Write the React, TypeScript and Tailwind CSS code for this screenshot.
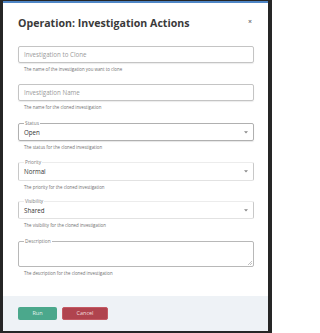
import React from 'react'

const font = { fontFamily: '"Open Sans", "Noto Sans", sans-serif' }

function Helper({ text }: { text: string }) {
  return <div className="mt-[3px] h-[6px] pl-[6px] text-[4.4px] leading-[6px] text-[#707070]">{text}</div>
}

function TextField({ placeholder }: { placeholder: string }) {
  return (
    <div className="flex h-[17px] items-center rounded-[2px] border border-[#c4c4c4] px-[5px] text-[6.2px] text-[#9a9a9a] shadow-[0_1px_1px_rgba(0,0,0,0.08)]">
      {placeholder}
    </div>
  )
}

function Caret() {
  return (
    <svg width="4" height="3" viewBox="0 0 4 3" className="shrink-0">
      <path d="M0 0.3 L4 0.3 L2 2.6 Z" fill="#8a8a8a" />
    </svg>
  )
}

function SelectField({ label, value, tall, faint }: { label: string; value: string; tall?: boolean; faint?: boolean }) {
  return (
    <div
      className={`relative flex items-center justify-between rounded-[2px] border px-[5px] ${tall ? 'h-[19px]' : 'h-[18px]'} ${
        faint ? 'border-[#c8c8c8] border-t-[#ececec] border-b-[#e2e2e2]' : 'border-[#b0b0b0] shadow-[0_1px_1px_rgba(0,0,0,0.1)]'
      }`}
    >
      <span className="absolute -top-[3px] left-[5px] bg-white px-[1px] text-[4.8px] leading-[5px] text-[#7a7a7a]">{label}</span>
      <span className="pt-[1px] text-[6.2px] text-[#333]">{value}</span>
      <Caret />
    </div>
  )
}

export default function App() {
  return (
    <div className="h-[333px] w-[272px] bg-[#262626] pb-[2px] pl-[3px] pr-[4px] pt-[1px]" style={font}>
      <div className="flex h-full flex-col border-t-2 border-[#4f86c6] bg-white">
        <div className="flex flex-col pl-[15px] pr-[14px]">
          <div className="relative mt-[13px] flex h-[14px] items-center">
            <h1 className="text-[10.6px] font-bold leading-[14px] text-[#3a3a3a]">Operation: Investigation Actions</h1>
            <span className="absolute right-[2px] top-[2px] text-[7px] font-bold leading-[8px] text-[#777]">×</span>
          </div>

          <div className="mt-[16px]">
            <TextField placeholder="Investigation to Clone" />
            <Helper text="The name of the investigation you want to clone" />
          </div>

          <div className="mt-[12px]">
            <TextField placeholder="Investigation Name" />
            <Helper text="The name for the cloned investigation" />
          </div>

          <div className="mt-[13px]">
            <SelectField label="Status" value="Open" />
            <Helper text="The status for the cloned investigation" />
          </div>

          <div className="mt-[12px]">
            <SelectField label="Priority" value="Normal" tall faint />
            <Helper text="The priority for the cloned investigation" />
          </div>

          <div className="mt-[11px]">
            <SelectField label="Visibility" value="Shared" faint />
            <Helper text="The visibility for the cloned investigation" />
          </div>

          <div className="mt-[13px]">
            <div className="relative h-[26px] rounded-[2px] border border-[#b8b8b8]">
              <span className="absolute -top-[3px] left-[5px] bg-white px-[1px] text-[4.8px] leading-[5px] text-[#7a7a7a]">
                Description
              </span>
              <svg width="4" height="4" viewBox="0 0 4 4" className="absolute bottom-[1px] right-[1px]">
                <path d="M4 0 L0 4 M4 2 L2 4" stroke="#999" strokeWidth="0.6" />
              </svg>
            </div>
            <Helper text="The description for the cloned investigation" />
          </div>
        </div>

        <div className="mt-auto flex h-[35px] items-start gap-[5px] bg-[#eef2f6] pl-[15px] pt-[11px]">
          <button className="flex h-[13px] w-[39px] items-center justify-center rounded-[2px] bg-[#4ba88c] text-[5.5px] text-[#e6f3ef]">
            Run
          </button>
          <button className="flex h-[13px] w-[46px] items-center justify-center rounded-[2px] border border-[#c45a64] bg-[#b0434e] text-[5.5px] text-[#f2dede]">
            Cancel
          </button>
        </div>
      </div>
    </div>
  )
}
